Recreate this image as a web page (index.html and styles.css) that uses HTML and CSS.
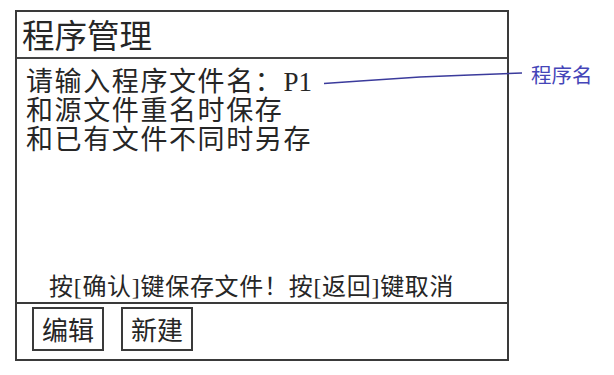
FILE: index.html
```html
<!DOCTYPE html>
<html lang="zh-CN">
<head>
<meta charset="utf-8">
<title>程序管理</title>
<link rel="stylesheet" href="styles.css">
</head>
<body>
<div class="panel">
  <div class="title">程序管理</div>
  <div class="content">
    <div class="lines">
      <div class="line">请输入程序文件名：<span class="latin">P1</span></div>
      <div class="line">和源文件重名时保存</div>
      <div class="line">和已有文件不同时另存</div>
    </div>
    <div class="hint">按[确认]键保存文件！按[返回]键取消</div>
  </div>
  <div class="footer">
    <div class="btn">编辑</div>
    <div class="btn">新建</div>
  </div>
</div>
<svg class="leader" width="614" height="375" viewBox="0 0 614 375">
  <polyline points="324,83.5 360,81 420,77 470,75 522,73" fill="none" stroke="#3b3b9c" stroke-width="1.6"/>
</svg>
<div class="note">程序名</div>
</body>
</html>
```

FILE: styles.css
```css
html, body {
  margin: 0;
  padding: 0;
  background: #ffffff;
}
body {
  width: 614px;
  height: 375px;
  position: relative;
  font-family: "Noto Sans CJK SC", "Noto Sans", sans-serif;
  color: #262626;
  overflow: hidden;
}
.panel {
  box-sizing: border-box;
  margin: 10px 0 0 15px;
  width: 494px;
  height: 351px;
  border: 2px solid #3a3a3a;
  display: flex;
  flex-direction: column;
}
.title {
  box-sizing: border-box;
  height: 47px;
  border-bottom: 2px solid #444444;
  font-size: 32.5px;
  line-height: 43px;
  padding-left: 5px;
}
.content {
  flex: 1;
  display: flex;
  flex-direction: column;
  justify-content: space-between;
  padding: 9px 0 2px 9px;
}
.line {
  font-family: "Liberation Serif", "Noto Sans CJK SC", serif;
  font-size: 27px;
  line-height: 29px;
  letter-spacing: 1.6px;
}
.latin {
  letter-spacing: 0;
}
.hint {
  font-family: "Liberation Serif", "Noto Sans CJK SC", serif;
  font-size: 24px;
  line-height: 26px;
  letter-spacing: 0.7px;
  padding-left: 23px;
}
.footer {
  box-sizing: border-box;
  height: 57px;
  border-top: 2px solid #3a3a3a;
  display: flex;
  gap: 17px;
  padding: 3px 0 0 15px;
}
.btn {
  box-sizing: border-box;
  width: 72px;
  height: 44px;
  border: 2px solid #3a3a3a;
  font-size: 26px;
  line-height: 39px;
  text-align: center;
}
.leader {
  position: absolute;
  left: 0;
  top: 0;
  pointer-events: none;
}
.note {
  position: absolute;
  left: 531px;
  top: 61px;
  font-size: 20.5px;
  line-height: 26px;
  color: #4545b8;
}
```
